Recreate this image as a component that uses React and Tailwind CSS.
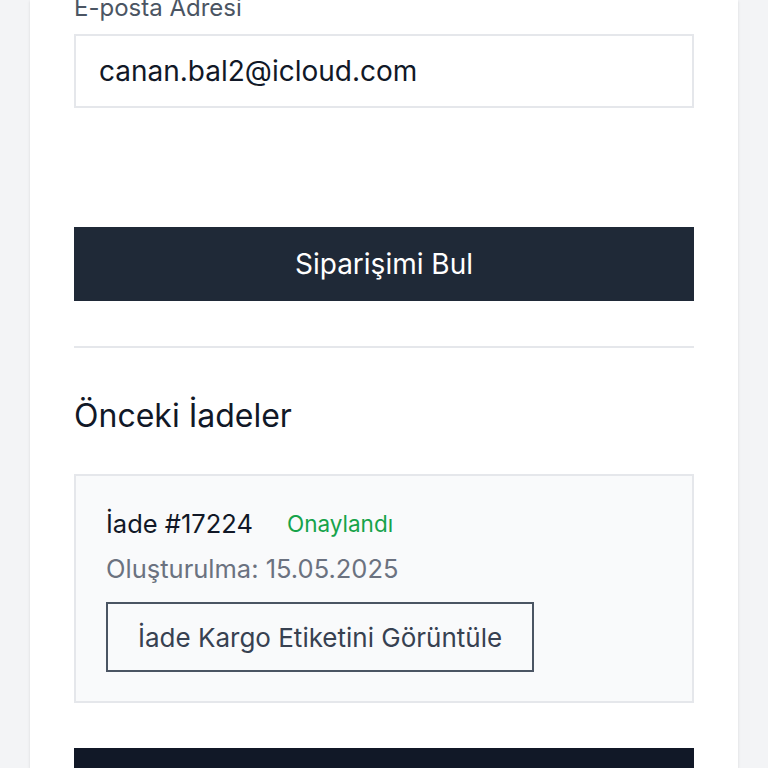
export default function App() {
  return (
    <div className="min-h-screen bg-[#f3f4f6] overflow-hidden" style={{ fontFamily: 'Inter, "Noto Sans", sans-serif' }}>
      <div className="mx-[30px] bg-white shadow-sm px-[44px] h-[768px] overflow-hidden">
        <div className="-mt-[8px]">
          {/* Email */}
          <label className="block text-[24px] leading-[32px] text-[#4b5563] mb-[10px]">E-posta Adresi</label>
          <div className="h-[74px] border-2 border-[#e5e7eb] bg-white flex items-center px-[23px]">
            <span className="text-[28px] text-[#111827]">canan.bal2@icloud.com</span>
          </div>

          <button className="mt-[119px] w-full h-[74px] bg-[#1f2937] text-white text-[28px]">
            Siparişimi Bul
          </button>

          <div className="mt-[45px] border-t-2 border-[#e5e7eb]"></div>

          {/* Previous returns */}
          <h2 className="mt-[46px] text-[32px] leading-[44px] text-[#111827]">Önceki İadeler</h2>

          <div className="mt-[36px] bg-[#f9fafb] border-2 border-[#e5e7eb] px-[30px] pt-[30px] pb-[29px]">
            <div className="flex items-center gap-[34px]">
              <span className="text-[25.5px] leading-[36px] text-[#111827]">İade #17224</span>
              <span className="text-[22.5px] text-[#16a34a]">Onaylandı</span>
            </div>
            <p className="mt-[9px] text-[25.5px] leading-[36px] text-[#6b7280]">Oluşturulma: 15.05.2025</p>
            <button className="mt-[15px] h-[70px] px-[30px] border-2 border-[#4b5563] text-[26px] text-[#374151]">
              İade Kargo Etiketini Görüntüle
            </button>
          </div>

          <button className="mt-[45px] w-full h-[74px] bg-[#111827] text-white text-[28px]">
            İade Talebi Oluştur
          </button>
        </div>
      </div>
    </div>
  );
}
